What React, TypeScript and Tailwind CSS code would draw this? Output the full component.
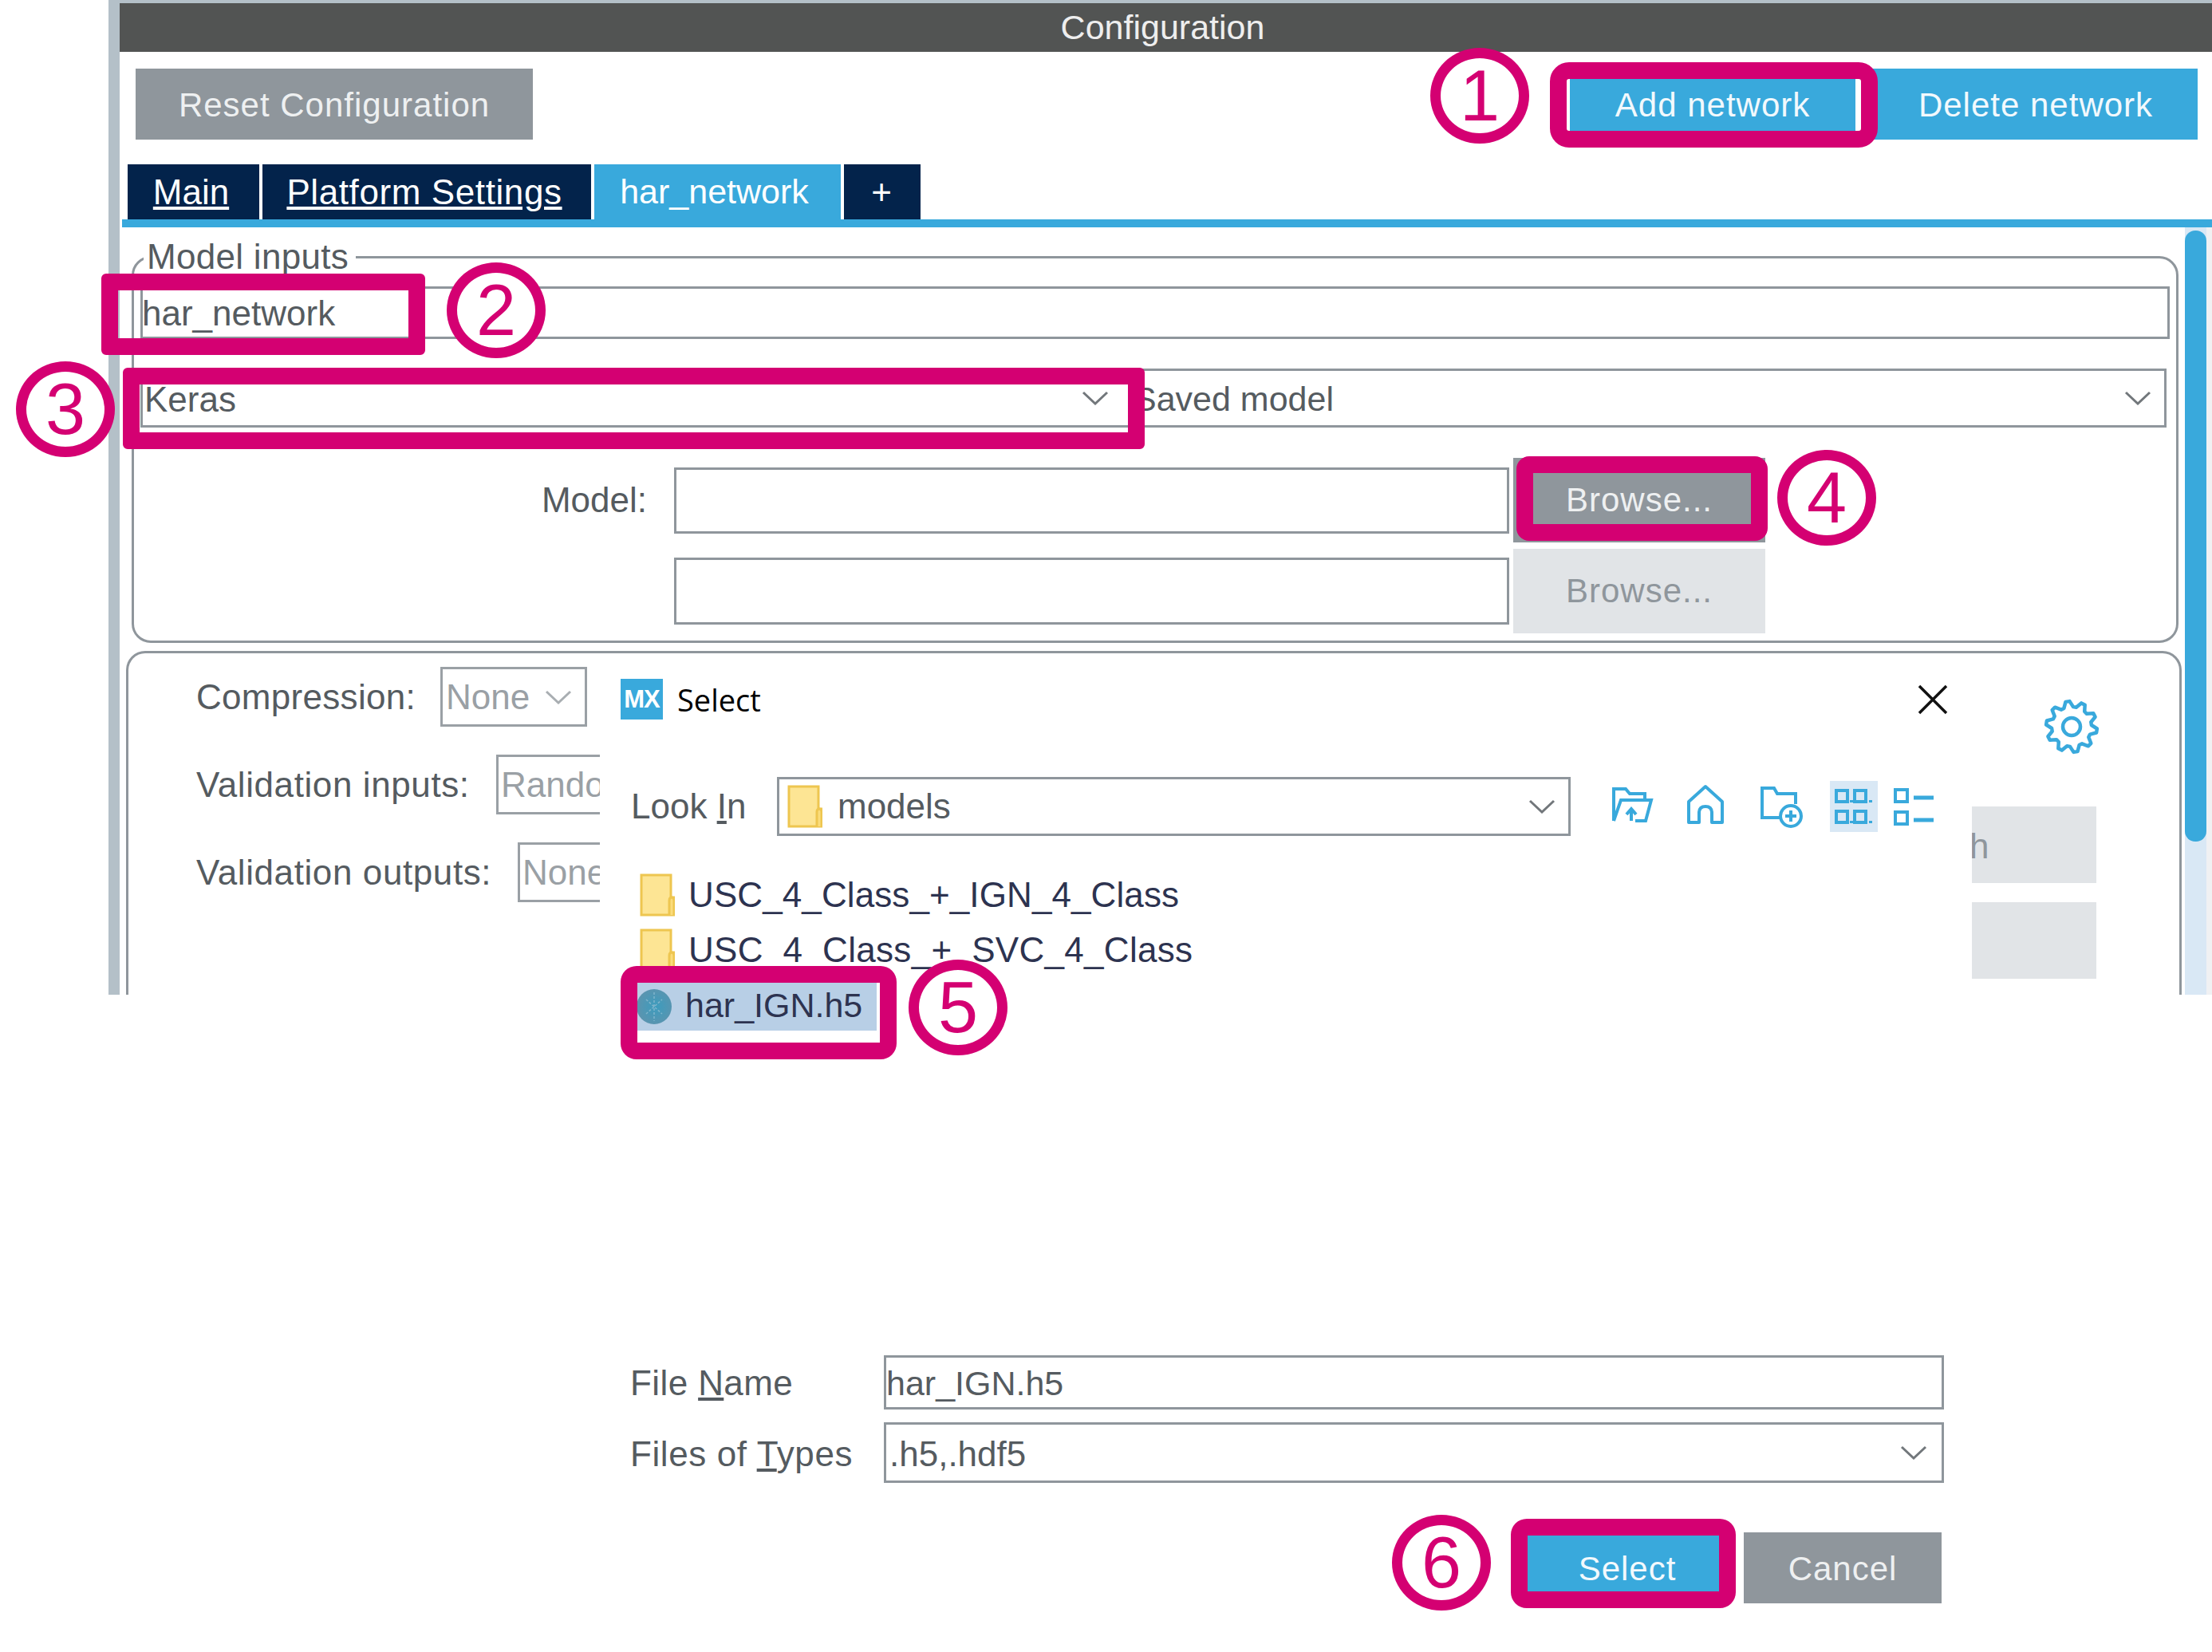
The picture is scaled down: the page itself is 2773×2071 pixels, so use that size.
import type { ReactNode } from "react";

function Chevron({ light = false }: { light?: boolean }) {
  return (
    <svg viewBox="0 0 34 18" className="w-[34px] h-[18px] shrink-0">
      <path d="M2 2 L17 16 L32 2" fill="none" stroke={light ? "#a9aeb2" : "#72777b"} strokeWidth="3" />
    </svg>
  );
}

function Folder() {
  return (
    <svg viewBox="0 0 44 54" className="w-[44px] h-[54px] shrink-0">
      <path d="M2 2 H39 V30 H43 V52 H2 Z" fill="#fde594" stroke="#eec650" strokeWidth="3" />
      <path d="M37 52 V34 Q37 30 40 30 Q43 30 43 34 V52" fill="#fbdc7c" stroke="#eec650" strokeWidth="3" />
    </svg>
  );
}

function ToolIcon({ children, className = "" }: { children: ReactNode; className?: string }) {
  return (
    <div className={"w-[60px] h-[64px] flex items-center justify-center shrink-0 " + className}>
      <svg viewBox="0 0 56 60" className="w-[56px] h-[60px]" fill="none" stroke="#39a9dc" strokeWidth="4">
        {children}
      </svg>
    </div>
  );
}

function Annotation({ n, className }: { n: string; className: string }) {
  return (
    <div
      className={
        "absolute w-[124px] h-[120px] rounded-[50%] border-[13px] border-[#d40072] bg-white flex items-center justify-center text-[90px] leading-none text-[#d40072] " +
        className
      }
    >
      {n}
    </div>
  );
}

// cog outline with rounded teeth
const cogPoints = Array.from({ length: 40 }, (_, i) => {
  const angle = ((i + 0.5) / 40) * Math.PI * 2;
  const r = i % 4 < 2 ? 32 : 25;
  return `${(35 + r * Math.cos(angle)).toFixed(1)},${(35 + r * Math.sin(angle)).toFixed(1)}`;
}).join(" ");

export default function App() {
  return (
    <div className="relative w-[2773px] h-[2071px] bg-white overflow-hidden font-['Liberation_Sans',Arial,sans-serif] text-[44px] leading-none text-[#555b60]">
      {/* Configuration panel, cut off at the bottom */}
      <div className="ml-[136px] h-[1247px] border-l-[14px] border-t-[4px] border-[#b4c0c8] flex flex-col">
        <div className="h-[61px] bg-[#525453] flex items-center justify-center text-[43px] text-[#eeeeee] pr-[8px]">
          Configuration
        </div>

        {/* Toolbar */}
        <div className="flex justify-between pt-[21px] pl-[20px] pr-[18px]">
          <button className="w-[498px] h-[89px] pt-[2px] bg-[#8f969c] text-[#eef0f1] text-[42px] tracking-[1px]">
            Reset Configuration
          </button>
          <div className="flex gap-[11px]">
            <button className="w-[358px] h-[89px] pt-[2px] bg-[#39a9dc] text-[#f2f9fd] text-[42px] tracking-[1px]">
              Add network
            </button>
            <button className="w-[418px] h-[89px] pt-[2px] pl-[12px] bg-[#39a9dc] text-[#f2f9fd] text-[42px] tracking-[1px]">
              Delete network
            </button>
          </div>
        </div>

        {/* Tabs */}
        <div className="flex gap-[4px] mt-[31px] pl-[10px] h-[69px] text-[44px]">
          <div className="w-[165px] pr-[6px] bg-[#03234b] text-white underline flex items-center justify-center">Main</div>
          <div className="w-[412px] pr-[6px] bg-[#03234b] text-white underline tracking-[0.6px] flex items-center justify-center">Platform Settings</div>
          <div className="w-[309px] pr-[8px] bg-[#39a9dc] text-white text-[43px] flex items-center justify-center">har_network</div>
          <div className="w-[96px] pr-[2px] bg-[#03234b] text-white flex items-center justify-center">+</div>
        </div>
        <div className="h-[10px] ml-[3px] bg-[#39a9dc]" />

        {/* Content and scroll bar */}
        <div className="flex flex-1 min-h-0">
          <div className="w-[2589px] shrink-0 flex flex-col">
            {/* Model inputs */}
            <div className="relative mt-[36px] ml-[15px] w-[2566px] h-[485px] shrink-0 border-[3px] border-[#8f969c] rounded-[24px] px-[8px] pt-[35px]">
              <span className="absolute left-[12px] top-[-24px] bg-white pl-[4px] pr-[9px] leading-[44px] tracking-[0.3px]">Model inputs</span>
              <div className="h-[66px] w-[2544px] border-[3px] border-[#8f969c] flex items-center pb-[2px]">
                <span className="ml-[-1px] pt-[3px]">har_network</span>
              </div>
              <div className="flex mt-[37px] h-[74px] w-[2540px]">
                <div className="w-[1244px] border-[3px] border-[#8f969c] flex items-center justify-between pl-[2px] pr-[27px]">
                  <span className="pt-[3px]">Keras</span>
                  <Chevron />
                </div>
                <div className="flex-1 border-[3px] border-l-0 border-[#8f969c] flex items-center justify-between pl-[1px] pr-[16px]">
                  <span className="pt-[3px] text-[43px]">Saved model</span>
                  <Chevron />
                </div>
              </div>
              <div className="flex items-center mt-[38px] ml-[-8px] h-[106px]">
                <span className="w-[643px] text-right">Model:</span>
                <div className="ml-[34px] w-[1047px] h-[83px] border-[3px] border-[#8f969c]" />
                <button className="ml-[5px] w-[316px] h-[106px] bg-[#8f969c] text-[#eef0f1] text-[42px] tracking-[1px]">Browse...</button>
              </div>
              <div className="flex items-center mt-[8px] ml-[-8px] h-[106px]">
                <span className="w-[643px]" />
                <div className="ml-[34px] w-[1047px] h-[84px] border-[3px] border-[#8f969c]" />
                <button className="ml-[5px] w-[316px] h-[106px] bg-[#e1e4e7] text-[#8f969c] text-[42px] tracking-[1px]">Browse...</button>
              </div>
            </div>

            {/* Compression and validation */}
            <div className="mt-[10px] ml-[8px] w-[2577px] flex-1 min-h-0 border-[3px] border-b-0 border-[#8f969c] rounded-t-[24px] flex">
              <div className="pt-[17px] pl-[85px] flex flex-col gap-[35px]">
                <div className="flex items-center h-[75px]">
                  <span className="w-[306px] tracking-[0.3px]">Compression:</span>
                  <div className="w-[184px] h-[75px] border-[3px] border-[#9aa0a5] flex items-center justify-between pl-[4px] pr-[16px] text-[#9aa0a5]">
                    None
                    <Chevron light />
                  </div>
                </div>
                <div className="flex items-center h-[75px]">
                  <span className="w-[376px] tracking-[0.6px]">Validation inputs:</span>
                  <div className="w-[130px] h-[75px] border-[3px] border-r-0 border-[#9aa0a5] flex items-center overflow-hidden pl-[3px] text-[#9aa0a5]">
                    Random
                  </div>
                </div>
                <div className="flex items-center h-[75px]">
                  <span className="w-[403px] tracking-[0.6px]">Validation outputs:</span>
                  <div className="w-[103px] h-[75px] border-[3px] border-r-0 border-[#9aa0a5] flex items-center overflow-hidden pl-[3px] text-[#9aa0a5]">
                    None
                  </div>
                </div>
              </div>
              <div className="ml-auto mr-[104px] w-[156px] pt-[57px] flex flex-col">
                <svg viewBox="0 0 70 70" className="w-[70px] h-[70px] self-end mr-[-4px]" fill="none" stroke="#39a9dc" strokeWidth="4.5" strokeLinejoin="round">
                  <circle cx="35" cy="35" r="11" />
                  <polygon points={cogPoints} />
                </svg>
                <div className="mt-[65px] h-[96px] bg-[#e1e4e7] text-[#8f969c] flex items-center overflow-hidden">
                  <span className="ml-[-3px] pt-[3px]">h</span>
                </div>
                <div className="mt-[24px] h-[96px] bg-[#e1e4e7]" />
              </div>
            </div>
          </div>

          <div className="w-[27px] shrink-0 bg-[#d9e8f5]">
            <div className="mt-[4px] h-[766px] bg-[#39a9dc] rounded-[13px]" />
          </div>
          <div className="flex-1 bg-[#f0f1f3]" />
        </div>
      </div>

      {/* Select dialog */}
      <div className="absolute left-[752px] top-[822px] w-[1720px] h-[1249px] bg-white flex flex-col">
        <div className="flex items-center justify-between pt-[29px] pl-[26px] pr-[30px]">
          <div className="flex items-center">
            <div className="w-[53px] h-[51px] bg-[#39a9dc] flex items-center justify-center text-white font-bold text-[31px] tracking-[-1px]">MX</div>
            <span className="ml-[18px] font-['Open_Sans',sans-serif] font-medium text-[38px] text-black">Select</span>
          </div>
          <svg viewBox="0 0 38 38" className="w-[38px] h-[38px]">
            <path d="M2 2 L36 36 M36 2 L2 36" stroke="#111111" strokeWidth="3.5" />
          </svg>
        </div>

        <div className="flex items-center mt-[72px] pl-[39px]">
          <span className="w-[183px] shrink-0">Look <u>I</u>n</span>
          <div className="w-[995px] h-[74px] border-[3px] border-[#8f969c] flex items-center justify-between pl-[10px] pr-[16px] shrink-0">
            <div className="flex items-center">
              <Folder />
              <span className="ml-[19px]">models</span>
            </div>
            <Chevron />
          </div>
          <ToolIcon className="ml-[47px]">
            <path d="M5 48 V8 H20 L25 14 H44 V22" />
            <path d="M5 48 L14 22 H52 L45 48 H32" />
            <path d="M27 48 V34 M21 40 L27 33 L33 40" />
          </ToolIcon>
          <ToolIcon className="ml-[32px]">
            <path d="M7 50 V24 L28 5 L49 24 V50 H36 V38 Q36 30 28 30 Q20 30 20 38 V50 Z" strokeLinejoin="round" />
          </ToolIcon>
          <ToolIcon className="ml-[34px]">
            <path d="M29 44 H5 V7 H20 L24 14 H47 V27" />
            <circle cx="41" cy="42" r="13" />
            <path d="M41 35 V49 M34 42 H48" />
          </ToolIcon>
          <ToolIcon className="ml-[32px] bg-[#d9e8f5]">
            <rect x="6" y="10" width="14" height="14" />
            <rect x="29" y="10" width="14" height="14" />
            <rect x="6" y="36" width="14" height="14" />
            <rect x="29" y="36" width="14" height="14" />
            <path d="M25 22 V25 M49 22 V25 M25 48 V51 M49 48 V51" />
          </ToolIcon>
          <ToolIcon className="ml-[16px]">
            <rect x="4" y="9" width="15" height="15" />
            <rect x="4" y="37" width="15" height="15" />
            <path d="M27 19 H52 M27 47 H52" strokeWidth="5" />
          </ToolIcon>
        </div>

        {/* File list */}
        <div className="mt-[39px] flex flex-col text-[#2d3350]">
          <div className="flex items-center h-[69px] pl-[50px]">
            <Folder />
            <span className="ml-[17px] tracking-[0.1px]">USC_4_Class_+_IGN_4_Class</span>
          </div>
          <div className="flex items-center h-[69px] pl-[50px]">
            <Folder />
            <span className="ml-[17px] tracking-[0.3px]">USC_4_Class_+_SVC_4_Class</span>
          </div>
          <div className="mt-[7px] ml-[47px] w-[300px] h-[60px] bg-[#b8cfe6] flex items-center">
            <svg viewBox="0 0 46 52" className="w-[46px] h-[52px] shrink-0 ml-[-2px]">
              <defs>
                <radialGradient id="globe" cx="0.55" cy="0.5" r="0.6">
                  <stop offset="0" stopColor="#3c9cbe" />
                  <stop offset="1" stopColor="#5f93ad" />
                </radialGradient>
              </defs>
              <circle cx="23" cy="26" r="22" fill="url(#globe)" />
              <path d="M23 8 V44 M13 17 L23 26 L33 17 M13 35 L23 26 L33 35" stroke="#7fb4cb" strokeWidth="1.5" strokeDasharray="3 2" fill="none" />
            </svg>
            <span className="ml-[16px] mt-[-4px] text-[43px]">har_IGN.h5</span>
          </div>
        </div>

        {/* File name and type */}
        <div className="mt-[407px] pl-[38px] flex items-center">
          <span className="w-[318px] shrink-0 tracking-[0.4px] pt-[2px]">File <u>N</u>ame</span>
          <div className="w-[1329px] h-[68px] border-[3px] border-[#8f969c] flex items-center text-[43px]">
            <span className="pt-[2px]">har_IGN.h5</span>
          </div>
        </div>
        <div className="mt-[16px] pl-[38px] flex items-center">
          <span className="w-[318px] shrink-0 tracking-[0.6px] pt-[3px]">Files of <u>T</u>ypes</span>
          <div className="w-[1329px] h-[76px] border-[3px] border-[#8f969c] flex items-center justify-between pl-[4px] pr-[18px]">
            <span className="pt-[3px]">.h5,.hdf5</span>
            <Chevron />
          </div>
        </div>
        <div className="mt-[62px] flex justify-end gap-[31px] pr-[38px]">
          <button className="w-[240px] h-[89px] pt-[3px] pl-[10px] bg-[#39a9dc] text-[#f2f9fd] text-[42px] tracking-[1px]">Select</button>
          <button className="w-[248px] h-[89px] pt-[3px] bg-[#8f969c] text-[#eef0f1] text-[42px] tracking-[1px]">Cancel</button>
        </div>
      </div>

      {/* Pink callouts drawn over the screenshot */}
      <div className="absolute left-[1943px] top-[78px] w-[411px] h-[107px] border-[21px] border-[#d40072] rounded-[24px]" />
      <div className="absolute left-[127px] top-[343px] w-[406px] h-[102px] border-[21px] border-[#d40072] rounded-[6px]" />
      <div className="absolute left-[154px] top-[461px] w-[1281px] h-[102px] border-[21px] border-[#d40072] rounded-[6px]" />
      <div className="absolute left-[1901px] top-[572px] w-[315px] h-[106px] border-[21px] border-[#d40072] rounded-[16px]" />
      <div className="absolute left-[778px] top-[1211px] w-[346px] h-[117px] border-[21px] border-[#d40072] rounded-[20px]" />
      <div className="absolute left-[1894px] top-[1904px] w-[282px] h-[112px] border-[21px] border-[#d40072] rounded-[20px]" />

      <Annotation n="1" className="left-[1793px] top-[60px]" />
      <Annotation n="2" className="left-[560px] top-[329px]" />
      <Annotation n="3" className="left-[20px] top-[453px]" />
      <Annotation n="4" className="left-[2228px] top-[564px]" />
      <Annotation n="5" className="left-[1139px] top-[1203px]" />
      <Annotation n="6" className="left-[1745px] top-[1899px]" />
    </div>
  );
}
